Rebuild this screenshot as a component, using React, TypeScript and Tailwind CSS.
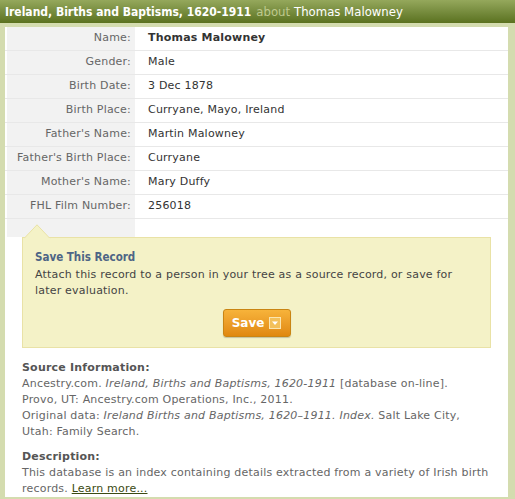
import React from 'react'

const ROWS: { label: string; value: string; bold?: boolean }[] = [
  { label: 'Name:', value: 'Thomas Malowney', bold: true },
  { label: 'Gender:', value: 'Male' },
  { label: 'Birth Date:', value: '3 Dec 1878' },
  { label: 'Birth Place:', value: 'Curryane, Mayo, Ireland' },
  { label: "Father's Name:", value: 'Martin Malowney' },
  { label: "Father's Birth Place:", value: 'Curryane' },
  { label: "Mother's Name:", value: 'Mary Duffy' },
  { label: 'FHL Film Number:', value: '256018' },
]

const VERDANA = "font-['Verdana','DejaVu_Sans',sans-serif] tracking-[0.2px]"

function SaveButton() {
  return (
    <button className="h-[28px] w-[68px] flex items-center justify-center gap-[5px] rounded-[3px] border border-[#c98513] bg-gradient-to-b from-[#f7b33a] to-[#e0880e] shadow-[0_1px_1px_rgba(0,0,0,0.2)]">
      <span className="font-['DejaVu_Sans',sans-serif] text-[12px] font-bold text-white leading-none tracking-normal">
        Save
      </span>
      {/* caixa com seta */}
      <svg width="12" height="12" viewBox="0 0 12 12">
        <rect x="0.5" y="0.5" width="11" height="11" fill="#f3c05a" stroke="#fbe6b0" />
        <path d="M3 4.5h6L6 8z" fill="#fff" />
      </svg>
    </button>
  )
}

export default function App() {
  return (
    <div className={`w-[515px] h-[499px] bg-[#d4dcaf] flex flex-col ${VERDANA}`}>
      <div className="h-[23px] shrink-0 bg-gradient-to-b from-[#95a85c] to-[#5b721f] px-[5px] flex items-center whitespace-nowrap tracking-normal">
        <span className="font-['DejaVu_Sans_Condensed',sans-serif] font-bold text-[12px] text-white">
          Ireland, Births and Baptisms, 1620-1911
        </span>
        <span className="font-['DejaVu_Sans_Condensed',sans-serif] text-[13px] text-[#bfc98e] ml-[5px]">about</span>
        <span className="font-['DejaVu_Sans_Condensed',sans-serif] text-[13px] text-white ml-[4px]">
          Thomas Malowney
        </span>
      </div>

      <div className="mt-[4px] ml-[5px] mr-[7px] mb-[7px] flex-1 bg-white flex flex-col">
        <div className="flex flex-col text-[11px]">
          {ROWS.map((r) => (
            <div key={r.label} className="h-[24px] flex border-b border-[#e8e8e8]">
              <div className="w-[128px] shrink-0 ml-[2px] bg-[#f2f2f2] pr-[4px] flex items-center justify-end text-[#666] whitespace-nowrap">
                {r.label}
              </div>
              <div className={`pl-[13px] flex items-center text-[#333] ${r.bold ? 'font-bold' : ''}`}>
                {r.value}
              </div>
            </div>
          ))}
          <div className="h-[18px] flex">
            <div className="w-[128px] ml-[2px] bg-[#f2f2f2]" />
          </div>
        </div>

        <div className="relative ml-[17px] w-[469px] h-[111px] bg-[#f4f2c7] border border-[#e9e2a6] px-[12px] pt-[11px] flex flex-col">
          <svg className="absolute left-[1px] -top-[14px]" width="30" height="15" viewBox="0 0 30 15">
            <path d="M0 14.5 L13 0.8 L26 14.5" fill="#f4f2c7" stroke="#e9e2a6" />
            <rect x="0.5" y="14" width="26" height="2" fill="#f4f2c7" />
          </svg>
          <div className="font-['DejaVu_Sans_Condensed',sans-serif] font-bold text-[11.5px] tracking-normal text-[#4d6585] leading-[16px]">
            Save This Record
          </div>
          <p className="text-[11px] leading-[16px] text-[#444] mt-[2px]">
            Attach this record to a person in your tree as a source record, or save for later evaluation.
          </p>
          <div className="flex justify-center mt-[10px]">
            <SaveButton />
          </div>
        </div>

        <div className="ml-[17px] mr-[16px] mt-[12px] text-[11px] leading-[16px] text-[#666]">
          <div className="font-bold text-[#555]">Source Information:</div>
          <p>
            Ancestry.com. <i>Ireland, Births and Baptisms, 1620-1911</i> [database on-line].
            <br />
            Provo, UT: Ancestry.com Operations, Inc., 2011.
            <br />
            Original data: <i>Ireland Births and Baptisms, 1620–1911. Index.</i> Salt Lake City, Utah: Family
            Search.
          </p>
          <div className="font-bold text-[#555] mt-[9px]">Description:</div>
          <p>
            This database is an index containing details extracted from a variety of Irish birth records.{' '}
            <a className="text-[#3b4a12] underline">Learn more...</a>
          </p>
        </div>
      </div>
    </div>
  )
}
